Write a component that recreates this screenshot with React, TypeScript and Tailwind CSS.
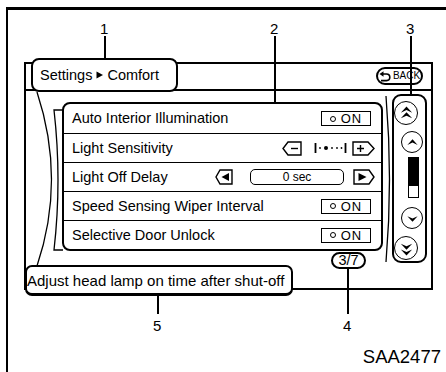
import React from "react";

function Toggle() {
  return (
    <div className="w-[50px] h-[15px] border-[1.5px] border-black flex items-center justify-center gap-[5px]">
      <span className="w-[6px] h-[6px] rounded-full border border-black" />
      <span className="text-[13px] leading-none tracking-[1px]">ON</span>
    </div>
  );
}

function Arrowhead({ y }: { y: number }) {
  return <path d={`M 5.5 ${y + 7} L 12 ${y} L 18.5 ${y + 7} L 12 ${y + 4} Z`} fill="black" />;
}

function ScrollButton({ size, double, down, className }: { size: number; double?: boolean; down?: boolean; className: string }) {
  return (
    <div
      className={`rounded-full border-[1.5px] border-black flex items-center justify-center shrink-0 ${className}`}
    >
      <svg width={size - 3} height={size - 3} viewBox="0 0 24 24" className={down ? "rotate-180" : ""}>
        {double ? (
          <>
            <Arrowhead y={4} />
            <Arrowhead y={10.5} />
          </>
        ) : (
          <Arrowhead y={8} />
        )}
      </svg>
    </div>
  );
}

const rows = [
  "Auto Interior Illumination",
  "Light Sensitivity",
  "Light Off Delay",
  "Speed Sensing Wiper Interval",
  "Selective Door Unlock",
];

function RowControl({ index }: { index: number }) {
  if (index === 1) {
    return (
      <div className="flex items-center mr-[6px]">
        <svg width="20" height="15" viewBox="0 0 20 15">
          <path d="M 6 1 L 19 1 L 19 14 L 6 14 L 1 7.5 Z" fill="none" stroke="black" strokeWidth="1.4" />
          <path d="M 9 7.5 L 16 7.5" stroke="black" strokeWidth="1.4" />
        </svg>
        <svg width="33" height="12" viewBox="0 0 33 12" className="ml-[12px]">
          <path d="M 1.5 1 L 1.5 11 M 31.5 1 L 31.5 11" stroke="black" strokeWidth="1.8" />
          <circle cx="6" cy="6" r="0.9" fill="black" />
          <circle cx="12" cy="6" r="2" fill="black" />
          <circle cx="18" cy="6" r="0.9" fill="black" />
          <circle cx="23" cy="6" r="0.9" fill="black" />
          <circle cx="27.5" cy="6" r="0.9" fill="black" />
        </svg>
        <svg width="23" height="15" viewBox="0 0 23 15" className="ml-[5px]">
          <path d="M 1 1 L 16 1 L 22 7.5 L 16 14 L 1 14 Z" fill="none" stroke="black" strokeWidth="1.4" />
          <path d="M 5 7.5 L 12 7.5 M 8.5 4 L 8.5 11" stroke="black" strokeWidth="1.4" />
        </svg>
      </div>
    );
  }
  if (index === 2) {
    return (
      <div className="flex items-center mr-[6px]">
        <svg width="18" height="16" viewBox="0 0 18 16">
          <path d="M 5 1 L 17 1 L 17 15 L 5 15 L 1 8 Z" fill="none" stroke="black" strokeWidth="1.4" />
          <path d="M 14 4 L 14 12 L 6.5 8 Z" fill="black" />
        </svg>
        <div className="ml-[17px] w-[94px] h-[16px] border-[1.5px] border-black rounded-[5px] flex items-center justify-center text-[12px] leading-none">
          0 sec
        </div>
        <svg width="22" height="16" viewBox="0 0 22 16" className="ml-[9px]">
          <path d="M 1 1 L 16 1 L 21 8 L 16 15 L 1 15 Z" fill="none" stroke="black" strokeWidth="1.4" />
          <path d="M 5.5 4 L 5.5 12 L 13.5 8 Z" fill="black" />
        </svg>
      </div>
    );
  }
  return (
    <div className="mr-[10px]">
      <Toggle />
    </div>
  );
}

export default function App() {
  return (
    <div className="relative w-[446px] h-[372px] bg-white overflow-hidden pt-[7px] pl-[6px] text-black font-['Liberation_Sans',Arial,sans-serif]">
      {/* figure frame */}
      <div className="w-[440px] h-[365px] border-t-[3px] border-l-2 border-black pt-[52px] pl-[16px]">
        {/* screen */}
        <div className="w-[409px] h-[228px] border-2 border-black flex flex-col">
          {/* header */}
          <div className="h-[27px] shrink-0 border-b-2 border-black flex justify-between items-start">
            <div className="ml-[5px] -mt-[6px] w-[147px] h-[34px] border-2 border-black rounded-[8px] bg-white relative z-10 flex items-center pl-[7px] text-[14.5px] leading-none">
              Settings
              <svg width="9" height="10" viewBox="0 0 9 10" className="mx-[3px]">
                <path d="M 1.5 1.5 L 8 5 L 1.5 8.5 Z" fill="black" />
              </svg>
              Comfort
            </div>
            <div className="mt-[3px] mr-[8px] w-[47px] h-[18px] border-2 border-black rounded-full flex items-center justify-center gap-[2px]">
              <svg width="12" height="11" viewBox="0 0 12 11">
                <path d="M 3 3 L 7.5 3 A 3.3 3.3 0 0 1 7.5 9.6 L 2 9.6" fill="none" stroke="black" strokeWidth="1.6" />
                <path d="M 0.5 3 L 4.5 0.2 L 4.5 5.8 Z" fill="black" />
              </svg>
              <span className="text-[10px] leading-none">BACK</span>
            </div>
          </div>

          {/* body */}
          <div className="h-[174px] shrink-0 flex">
            <div className="w-[36px] shrink-0">
              <svg width="36" height="176" viewBox="0 0 36 176" className="overflow-visible block">
                <path d="M 11 1 Q 40 89 11 175" fill="none" stroke="black" strokeWidth="1.3" />
                <path d="M 37 19 L 28 19 Q 36 89 28 159 L 37 159" fill="none" stroke="black" strokeWidth="1.3" />
              </svg>
            </div>

            <div className="w-[321px] shrink-0 pt-[11px] flex flex-col">
              <div className="h-[149px] shrink-0 border-2 border-black rounded-[8px] flex flex-col">
                {rows.map((label, i) => (
                  <div
                    key={label}
                    className={`h-[29px] shrink-0 flex items-center justify-between pl-[8px] text-[14.5px] leading-none ${
                      i > 0 ? "border-t border-black" : ""
                    }`}
                  >
                    <span>{label}</span>
                    <RowControl index={i} />
                  </div>
                ))}
              </div>
              <div className="ml-[269px] mt-[1px] w-[35px] h-[17px] shrink-0 border-2 border-black rounded-full flex items-center justify-center text-[14.5px] leading-none">
                3/7
              </div>
            </div>

            <div className="w-[9px] shrink-0">
              <svg width="9" height="176" viewBox="0 0 9 176" className="overflow-visible block">
                <path d="M 3 5 Q 10 89 3 171" fill="none" stroke="black" strokeWidth="1.3" />
              </svg>
            </div>

            <div className="mt-[3px] w-[35px] h-[169px] shrink-0 border-2 border-black rounded-[9px] flex flex-col">
              <ScrollButton size={24} double className="w-[24px] h-[24px] mt-[5px]" />
              <ScrollButton size={22} className="w-[22px] h-[22px] mt-[6px] ml-[7px]" />
              <div className="mt-[4px] ml-[14px] w-[11px] h-[41px] shrink-0 border-[1.5px] border-black flex flex-col">
                <div className="h-[28px] bg-black" />
              </div>
              <ScrollButton size={22} down className="w-[22px] h-[22px] mt-[9px] ml-[7px]" />
              <ScrollButton size={24} double down className="w-[24px] h-[24px] mt-[7px]" />
            </div>
          </div>

          {/* status line */}
          <div className="-ml-[1px] w-[268px] h-[31px] shrink-0 border-2 border-b-[3px] border-black rounded-[7px] bg-white relative z-10 flex items-center text-[15px] leading-none">
            Adjust head lamp on time after shut-off
          </div>
        </div>
      </div>

      {/* callouts */}
      <div className="absolute left-[104px] top-[36px] w-[1.5px] h-[22px] bg-black z-20" />
      <div className="absolute left-[274px] top-[36px] w-[1.5px] h-[66px] bg-black z-20" />
      <div className="absolute left-[410px] top-[36px] w-[1.5px] h-[58px] bg-black z-20" />
      <div className="absolute left-[347px] top-[268px] w-[1.5px] h-[46px] bg-black z-20" />
      <div className="absolute left-[157px] top-[296px] w-[1.5px] h-[18px] bg-black z-20" />

      <span className="absolute left-[100px] top-[21px] text-[15px] leading-none">1</span>
      <span className="absolute left-[270px] top-[21px] text-[15px] leading-none">2</span>
      <span className="absolute left-[406px] top-[21px] text-[15px] leading-none">3</span>
      <span className="absolute left-[343px] top-[318px] text-[15px] leading-none">4</span>
      <span className="absolute left-[153px] top-[318px] text-[15px] leading-none">5</span>

      <span className="absolute right-[5px] top-[348px] text-[18.5px] leading-none">SAA2477</span>
    </div>
  );
}
